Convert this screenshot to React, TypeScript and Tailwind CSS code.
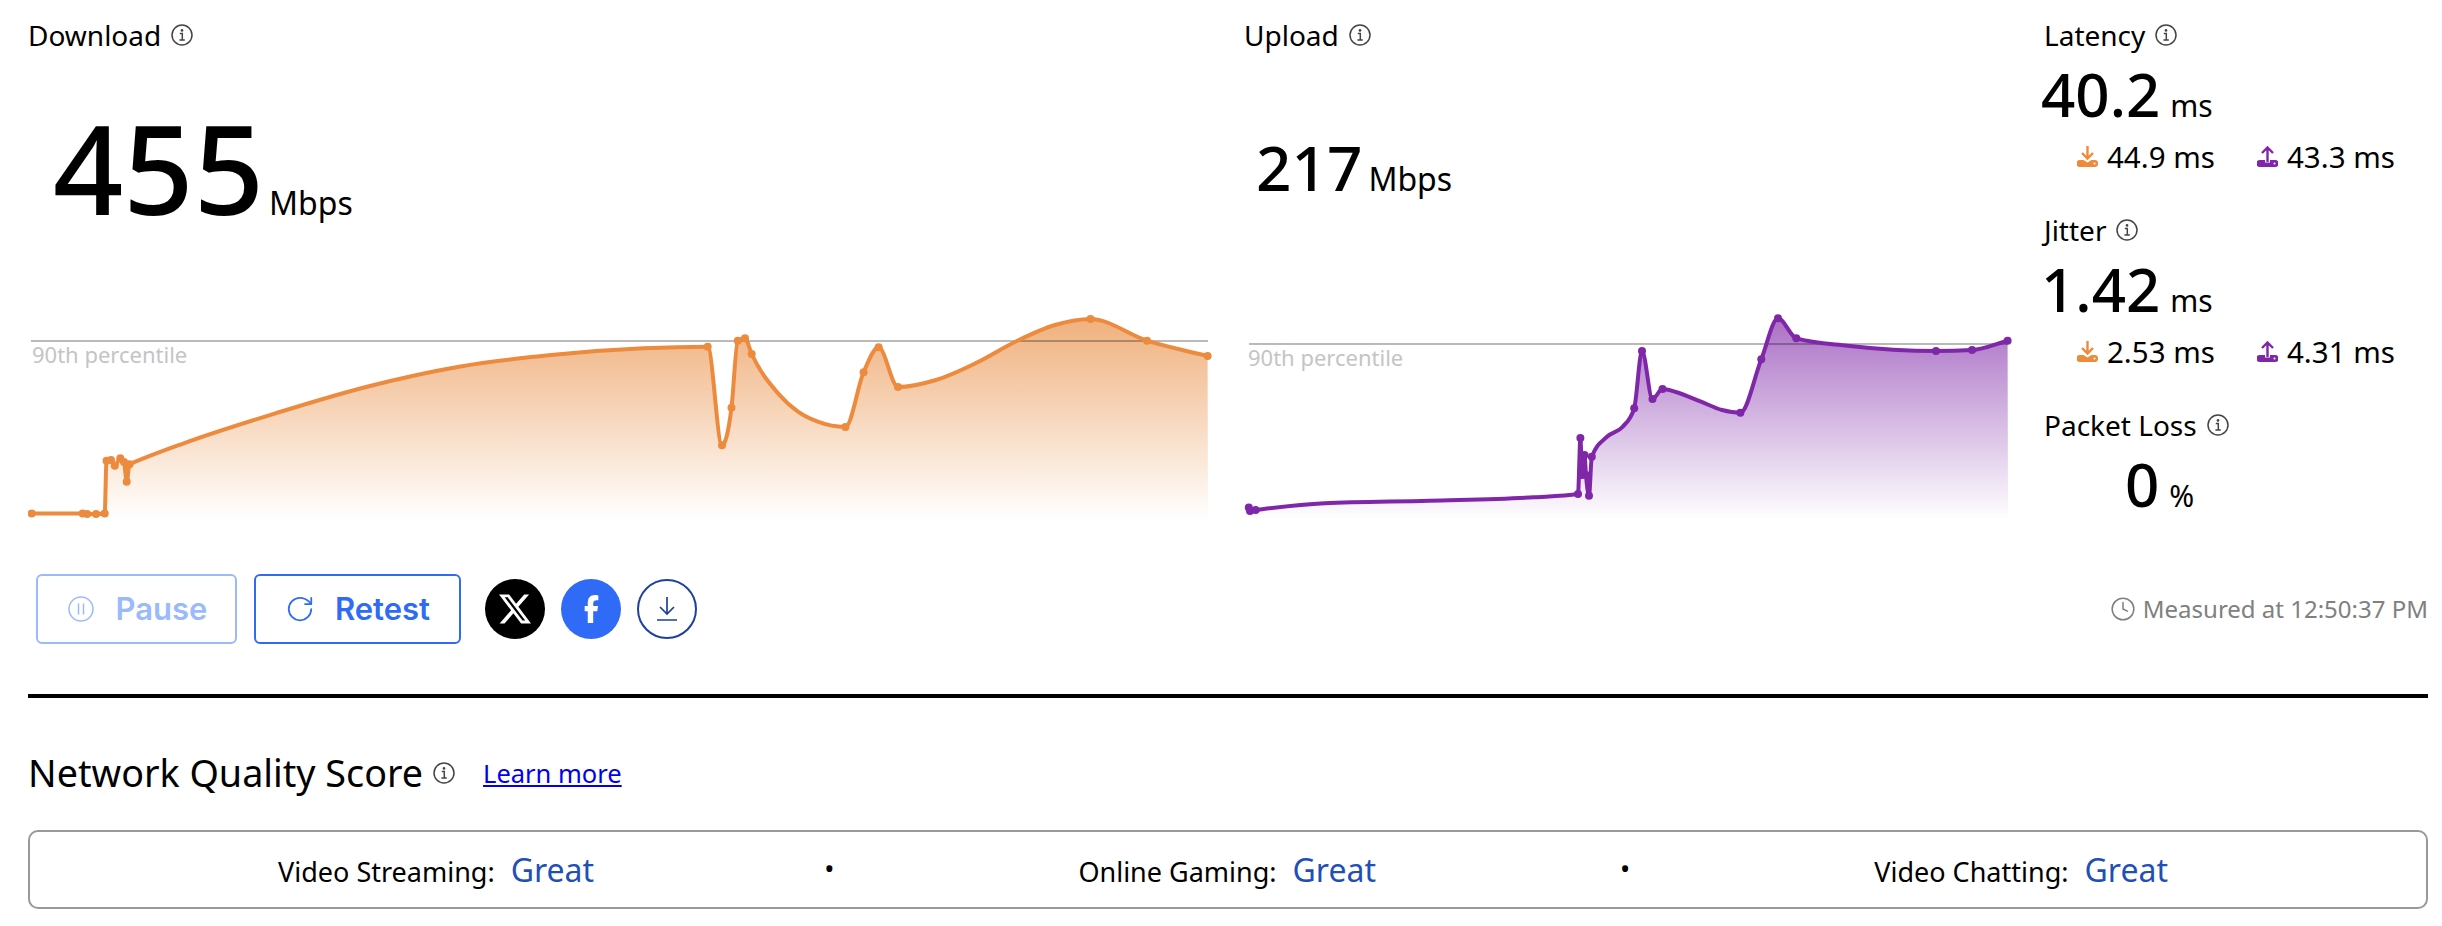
import React from "react";
import { RotateCw, Clock } from "lucide-react";

type P = [number, number, number?];

function smooth(pts: P[]): string {
  const n = pts.length;
  const m: number[] = new Array(n).fill(0);
  const s: number[] = [];
  for (let i = 0; i < n - 1; i++) {
    const dx = pts[i + 1][0] - pts[i][0];
    s.push(dx === 0 ? 0 : (pts[i + 1][1] - pts[i][1]) / dx);
  }
  m[0] = s[0];
  m[n - 1] = s[n - 2];
  for (let i = 1; i < n - 1; i++) {
    if (s[i - 1] * s[i] <= 0) m[i] = 0;
    else {
      const h0 = pts[i][0] - pts[i - 1][0];
      const h1 = pts[i + 1][0] - pts[i][0];
      m[i] = (s[i - 1] * h1 + s[i] * h0) / (h0 + h1);
      const lim = 2 * Math.min(Math.abs(s[i - 1]), Math.abs(s[i]));
      if (Math.abs(m[i]) > lim) m[i] = Math.sign(m[i]) * lim;
    }
  }
  let d = `M${pts[0][0]} ${pts[0][1]}`;
  for (let i = 0; i < n - 1; i++) {
    const h = (pts[i + 1][0] - pts[i][0]) / 3;
    d += `C${pts[i][0] + h} ${pts[i][1] + m[i] * h} ${pts[i + 1][0] - h} ${pts[i + 1][1] - m[i + 1] * h} ${pts[i + 1][0]} ${pts[i + 1][1]}`;
  }
  return d;
}

const downPts: P[] = [
  [31.7, 513.5, 1], [82.6, 513.5, 1], [87.2, 514, 1], [96, 514, 1], [104.7, 513.5, 1], [106.5, 460.7, 1], [111, 460, 1],
  [114.8, 465.7, 1], [120.3, 458.3, 1], [124, 462, 1], [126.7, 481.7, 1], [129.5, 464.3, 1], [132, 463.2], [183.7, 443.3],
  [275.5, 413.3], [367, 386.7], [459, 366.7], [551, 355], [643, 348.3], [707.7, 346.7, 1], [722, 445.3, 1],
  [731.5, 407.7, 1], [737.8, 340.7, 1], [745, 338.3, 1], [751.7, 354, 1], [778, 393.3], [798, 411.7], [817.7, 421.7], [845.4, 427, 1],
  [863.6, 372.3, 1], [878.6, 347.3, 1], [898, 387, 1], [936, 380], [976, 363], [1015.4, 341.7], [1055, 325], [1090.5, 319, 1],
  [1147, 340.7, 1], [1207.6, 356, 1],
];

const upPts: P[] = [
  [1248.8, 507.5, 1], [1250, 511, 1], [1255.6, 510, 1], [1262, 509.2], [1324.6, 503.3], [1429, 500.7], [1533.8, 497.3], [1578, 494, 1], [1580.4, 438, 1],
  [1582, 475, 1], [1584.5, 455, 1], [1586, 475, 1], [1589, 495.7, 1], [1591.8, 456.7, 1], [1607, 436.7], [1622.7, 426.7],
  [1634.2, 408.3, 1], [1642, 351, 1], [1652.5, 399, 1], [1662.5, 389, 1], [1675, 391.7], [1701, 401.7], [1722, 410],
  [1740.4, 412.7, 1], [1761.3, 359.3, 1], [1778, 318.3, 1], [1796.3, 338.3, 1], [1847.6, 345.7], [1936, 351, 1], [1972, 350, 1],
  [2007.6, 340.7, 1],
];

function Chart({ pts, color, top, x0, x1, lineY, labelX, labelY, id, vx, width }: { pts: P[]; color: string; top: string; x0: number; x1: number; lineY: number; labelX: number; labelY: number; id: string; vx: number; width: number }) {
  const line = smooth(pts);
  const area = `${line}L${x1} 522L${pts[0][0]} 522Z`;
  return (
    <svg viewBox={`${vx} 300 ${width} 230`} width={width} height={230} className="block">
      <defs>
        <linearGradient id={id} gradientUnits="userSpaceOnUse" x1="0" y1="318" x2="0" y2="520">
          <stop offset="0" stopColor={top} stopOpacity="0.66" />
          <stop offset="1" stopColor={top} stopOpacity="0" />
        </linearGradient>
      </defs>
      <path d={area} fill={`url(#${id})`} />
      <rect x={x0} y={lineY} width={x1 - x0} height={2} fill="#000" fillOpacity="0.27" />
      <text x={labelX} y={labelY} fontSize="22" fill="#c4c4c4" fontFamily="'Noto Sans', sans-serif">90th percentile</text>
      <path d={line} fill="none" stroke={color} strokeWidth="4" strokeLinejoin="round" />
      {pts.filter((p) => p[2]).map((p, i) => (
        <circle key={i} cx={p[0]} cy={p[1]} r="4" fill={color} />
      ))}
    </svg>
  );
}

function Info() {
  return (
    <svg width={22} height={22} viewBox="0 0 22 22" fill="none" className="shrink-0">
      <circle cx="11" cy="11" r="10" stroke="#444" strokeWidth="1.5" />
      <circle cx="11" cy="6.4" r="1.3" fill="#444" />
      <path d="M8.8 9.6h2.5v6.2M8.4 16h5.4" stroke="#444" strokeWidth="1.5" />
    </svg>
  );
}

function DownIcon() {
  return (
    <svg width="21" height="21" viewBox="0 0 21 21" className="shrink-0">
      <path d="M10.5 0v11M5 7l5.5 5.5L16 7" stroke="#ee8a3c" strokeWidth="2.4" fill="none" />
      <path d="M3 14h3.5l4 2.5 4-2.5H18a3 3 0 0 1 3 3.5 3 3 0 0 1-3 3.5H3a3 3 0 0 1 0-7z" fill="#ee8a3c" />
      <circle cx="17.5" cy="17.6" r="1" fill="#fff" />
    </svg>
  );
}

function UpIcon() {
  return (
    <svg width="21" height="21" viewBox="0 0 21 21" className="shrink-0">
      <path d="M10.5 16V2M5 7l5.5-5.5L16 7" stroke="#7f27a8" strokeWidth="2.4" fill="none" />
      <path d="M3 14h5v2.5h5V14h5a3.5 3.5 0 0 1 0 7H3a3.5 3.5 0 0 1 0-7z" fill="#7f27a8" />
      <circle cx="17.5" cy="17.6" r="1" fill="#fff" />
    </svg>
  );
}

function Heading({ children }: { children: React.ReactNode }) {
  return (
    <div className="flex h-[36px] items-center gap-[10px] text-[28px] leading-[36px] text-black">
      <span>{children}</span>
      <Info />
    </div>
  );
}

function Metric({ title, value, dl, ul }: { title: string; value: string; dl: string; ul: string }) {
  return (
    <div className="h-[195px]">
      <Heading>{title}</Heading>
      <div className="mt-[11px] -ml-[3px] flex items-baseline gap-[10px] text-black">
        <span className="text-[60px] leading-[60px] font-medium">{value}</span>
        <span className="text-[30px] leading-[30px]">ms</span>
      </div>
      <div className="mt-[18px] flex text-[29.5px] leading-[29px] text-black">
        <div className="ml-[33px] flex w-[180px] items-center gap-[9px]">
          <DownIcon />
          <span>{dl}</span>
        </div>
        <div className="flex items-center gap-[9px]">
          <UpIcon />
          <span>{ul}</span>
        </div>
      </div>
    </div>
  );
}

function Score({ label, className = "" }: { label: string; className?: string }) {
  return (
    <div className={`flex items-baseline gap-[16px] text-[27px] text-black ${className}`}>
      <span>{label}</span>
      <span className="text-[32px] text-[#1f4fb8]">Great</span>
    </div>
  );
}

export default function App() {
  return (
    <div className="h-[926px] w-full overflow-hidden bg-white pt-[17px] pr-[14px] pl-[28px] text-black [font-family:'Noto_Sans',sans-serif]">
      <div className="flex">
        <div className="w-[1216px]">
          <Heading>Download</Heading>
          <div className="h-[247px] pt-[52px] pl-[25px]">
            <div className="flex items-baseline gap-[5px]">
              <span className="text-[123px] leading-[126px] font-medium">455</span>
              <span className="text-[32px] leading-[32px]">Mbps</span>
            </div>
          </div>
          <Chart pts={downPts} color="#ec8a3e" top="#e8883a" x0={31} x1={1208} lineY={340} labelX={32} labelY={363} id="gd" vx={28} width={1216} />
        </div>
        <div className="w-[800px]">
          <Heading>Upload</Heading>
          <div className="h-[247px] pt-[83px] pl-[12px]">
            <div className="flex items-baseline gap-[6px]">
              <span className="text-[62px] leading-[63px] font-medium">217</span>
              <span className="text-[32px] leading-[32px]">Mbps</span>
            </div>
          </div>
          <Chart pts={upPts} color="#7f27a8" top="#7f27a8" x0={1249} x1={2008} lineY={343} labelX={1248} labelY={366} id="gu" vx={1244} width={800} />
        </div>
        <div className="flex-1">
          <Metric title="Latency" value="40.2" dl="44.9 ms" ul="43.3 ms" />
          <Metric title="Jitter" value="1.42" dl="2.53 ms" ul="4.31 ms" />
          <Heading>Packet Loss</Heading>
          <div className="mt-[11px] flex items-baseline gap-[10px] pl-[81px]">
            <span className="text-[60px] leading-[60px] font-medium">0</span>
            <span className="text-[30px] leading-[30px]">%</span>
          </div>
        </div>
      </div>

      <div className="mt-[44px] flex h-[70px] items-center pl-[8px]">
        <button className="flex h-[70px] w-[201px] items-center justify-center gap-[22px] rounded-[6px] border-2 border-[#9bbafc] pl-[2px] text-[#9bbafc] [font-family:Inter,sans-serif]">
          <svg width="26" height="26" viewBox="0 0 26 26" fill="none" stroke="#9bbafc" strokeWidth="1.5" className="shrink-0">
            <circle cx="13" cy="13" r="12" />
            <path d="M10.5 7.5v11M15.5 7.5v11" />
          </svg>
          <span className="text-[31px] font-semibold">Pause</span>
        </button>
        <button className="ml-[17px] flex h-[70px] w-[207px] items-center justify-center gap-[20px] rounded-[6px] border-2 border-[#2f6bf6] text-[#2f6bf6] [font-family:Inter,sans-serif]">
          <RotateCw size={30} strokeWidth={1.4} />
          <span className="text-[31px] font-semibold">Retest</span>
        </button>
        <div className="ml-[24px] flex h-[60px] w-[60px] items-center justify-center rounded-full bg-black">
          <svg width="32" height="32" viewBox="0 0 24 24" fill="#fff">
            <path d="M18.901 1.153h3.68l-8.04 9.19L24 22.846h-7.406l-5.8-7.584-6.638 7.584H.474l8.6-9.83L0 1.154h7.594l5.243 6.932ZM17.61 20.644h2.039L6.486 3.24H4.298Z" />
          </svg>
        </div>
        <div className="ml-[16px] flex h-[60px] w-[60px] items-center justify-center rounded-full bg-[#2f6bf6]">
          <svg width="15" height="28" viewBox="0 0 320 512" fill="#fff" preserveAspectRatio="none">
            <path d="M80 299.3V512H196V299.3h86.5l18-97.8H196V166.9c0-51.7 20.3-71.5 72.7-71.5c16.3 0 29.4 .4 37 1.2V7.9C291.4 4 256.4 0 236.2 0C129.3 0 80 50.5 80 159.4v42.1H14v97.8H80z" />
          </svg>
        </div>
        <div className="ml-[16px] flex h-[60px] w-[60px] items-center justify-center rounded-full border-2 border-[#1e40a0]">
          <svg width="20" height="24" viewBox="0 0 20 24" fill="none" stroke="#1e40a0" strokeWidth="1.7">
            <path d="M10 0v16M3 10l7 7 7-7M0 23h20" />
          </svg>
        </div>
        <div className="ml-auto flex items-center gap-[7px] text-[24px] text-[#808080]">
          <Clock size={26} strokeWidth={1.4} />
          <span>Measured at 12:50:37 PM</span>
        </div>
      </div>

      <div className="mt-[50px] h-[4px] bg-black" />

      <div className="mt-[50px] flex h-[50px] items-center">
        <span className="text-[37.7px] leading-[50px]">Network Quality Score</span>
        <span className="ml-[10px]"><Info /></span>
        <a className="ml-[28px] text-[25.5px] text-[#0000ee] underline" href="#">Learn more</a>
      </div>

      <div className="mt-[32px] flex h-[79px] items-center justify-evenly rounded-[10px] border-2 border-[#999]">
        <Score label="Video Streaming:" className="ml-[4px] -mr-[14px]" />
        <span className="text-[27px]">•</span>
        <Score label="Online Gaming:" />
        <span className="text-[27px]">•</span>
        <Score label="Video Chatting:" className="pr-[14px]" />
      </div>
    </div>
  );
}
